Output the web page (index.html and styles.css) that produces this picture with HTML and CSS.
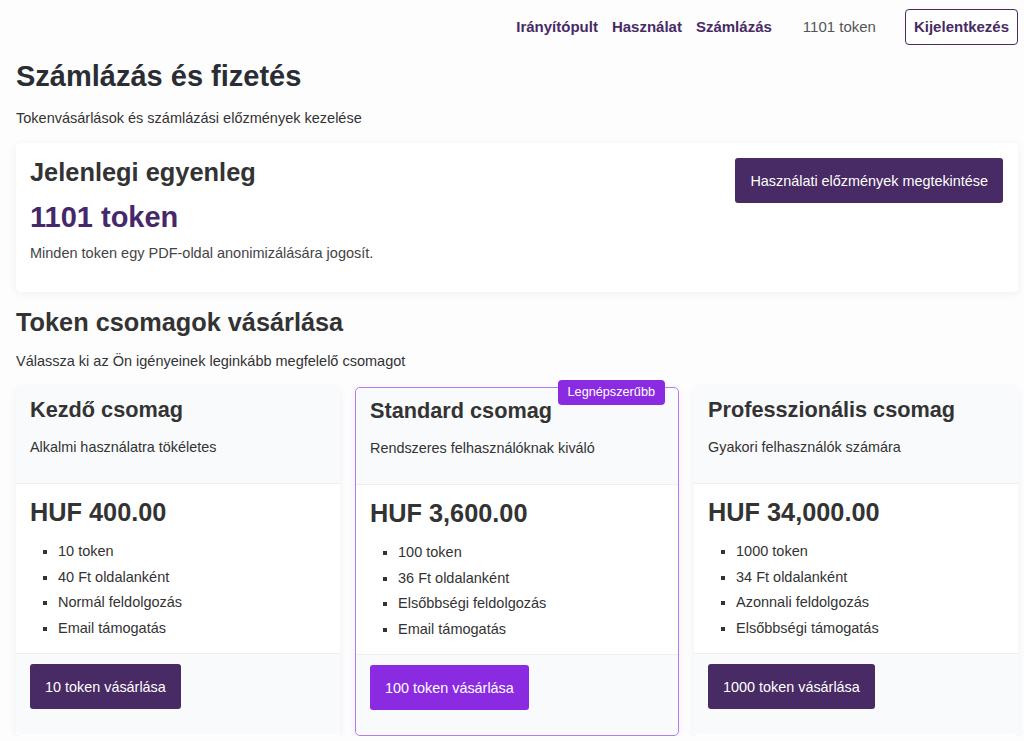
FILE: index.html
```html
<!DOCTYPE html>
<html lang="hu">
<head>
    <meta charset="UTF-8">
    <meta name="viewport" content="width=device-width, initial-scale=1.0">
    <title>Számlázás és fizetés</title>
    <link rel="stylesheet" href="styles.css">
</head>
<body>
    <header class="topbar">
        <nav class="nav">
            <a href="#" class="nav-link">Irányítópult</a>
            <a href="#" class="nav-link">Használat</a>
            <a href="#" class="nav-link">Számlázás</a>
        </nav>
        <span class="nav-balance">1101 token</span>
        <button class="btn-outline">Kijelentkezés</button>
    </header>

    <main class="page">
        <h1 class="page-title">Számlázás és fizetés</h1>
        <p class="page-sub">Tokenvásárlások és számlázási előzmények kezelése</p>

        <section class="card balance">
            <div class="balance-info">
                <h2 class="balance-title">Jelenlegi egyenleg</h2>
                <div class="balance-value">1101 token</div>
                <p class="balance-note">Minden token egy PDF-oldal anonimizálására jogosít.</p>
            </div>
            <button class="btn btn-dark">Használati előzmények megtekintése</button>
        </section>

        <h2 class="section-title">Token csomagok vásárlása</h2>
        <p class="section-sub">Válassza ki az Ön igényeinek leginkább megfelelő csomagot</p>

        <div class="plans">
            <div class="card plan">
                <div class="plan-head">
                    <h3 class="plan-name">Kezdő csomag</h3>
                    <p class="plan-desc">Alkalmi használatra tökéletes</p>
                </div>
                <div class="plan-body">
                    <div class="plan-price">HUF 400.00</div>
                    <ul class="plan-features">
                        <li>10 token</li>
                        <li>40 Ft oldalanként</li>
                        <li>Normál feldolgozás</li>
                        <li>Email támogatás</li>
                    </ul>
                </div>
                <div class="plan-foot">
                    <button class="btn btn-dark">10 token vásárlása</button>
                </div>
            </div>

            <div class="card plan featured">
                <span class="badge">Legnépszerűbb</span>
                <div class="plan-head">
                    <h3 class="plan-name">Standard csomag</h3>
                    <p class="plan-desc">Rendszeres felhasználóknak kiváló</p>
                </div>
                <div class="plan-body">
                    <div class="plan-price">HUF 3,600.00</div>
                    <ul class="plan-features">
                        <li>100 token</li>
                        <li>36 Ft oldalanként</li>
                        <li>Elsőbbségi feldolgozás</li>
                        <li>Email támogatás</li>
                    </ul>
                </div>
                <div class="plan-foot">
                    <button class="btn btn-violet">100 token vásárlása</button>
                </div>
            </div>

            <div class="card plan">
                <div class="plan-head">
                    <h3 class="plan-name">Professzionális csomag</h3>
                    <p class="plan-desc">Gyakori felhasználók számára</p>
                </div>
                <div class="plan-body">
                    <div class="plan-price">HUF 34,000.00</div>
                    <ul class="plan-features">
                        <li>1000 token</li>
                        <li>34 Ft oldalanként</li>
                        <li>Azonnali feldolgozás</li>
                        <li>Elsőbbségi támogatás</li>
                    </ul>
                </div>
                <div class="plan-foot">
                    <button class="btn btn-dark">1000 token vásárlása</button>
                </div>
            </div>
        </div>
    </main>
</body>
</html>
```

FILE: styles.css
```css
* {
    box-sizing: border-box;
}
body {
    font-family: "Liberation Sans", Arial, sans-serif;
    margin: 0;
    padding: 0;
    background-color: #fdfdfe;
    color: #333;
}

.topbar {
    display: flex;
    justify-content: flex-end;
    align-items: center;
    height: 53px;
    padding: 0 6px 0 16px;
}
.nav {
    display: flex;
    gap: 14px;
}
.nav-link {
    color: #482a64;
    font-weight: bold;
    font-size: 15px;
    text-decoration: none;
}
.nav-balance {
    color: #555;
    font-size: 15px;
    margin: 0 29px 0 31px;
}
.btn-outline {
    font-family: inherit;
    font-size: 15px;
    font-weight: bold;
    color: #482a64;
    background: #fff;
    border: 1px solid #482a64;
    border-radius: 4px;
    padding: 0 8px;
    height: 36px;
}

.page {
    padding: 0 6px 0 16px;
}
.page-title {
    font-size: 29px;
    margin: 7px 0 0;
    line-height: 32px;
    color: #2a2d33;
}
.page-sub {
    font-size: 14.5px;
    line-height: 17px;
    color: #333;
    margin: 18px 0 16px;
}

.card {
    background: #fff;
    border-radius: 5px;
    box-shadow: 0 2px 10px rgba(40, 40, 90, 0.06);
}

.balance {
    display: flex;
    justify-content: space-between;
    align-items: flex-start;
    padding: 15px 15px 15px 14px;
    height: 149px;
}
.balance-title {
    font-size: 25.4px;
    margin: 0;
    line-height: 29px;
    color: #333;
}
.balance-value {
    font-size: 29px;
    font-weight: bold;
    color: #46286a;
    margin-top: 13px;
    line-height: 34px;
}
.balance-note {
    font-size: 14.5px;
    line-height: 17px;
    margin: 11px 0 0;
    color: #444;
}

.btn {
    font-family: inherit;
    font-size: 14.4px;
    color: #fff;
    border: none;
    border-radius: 3px;
    padding: 0 15px;
    height: 45px;
}
.btn-dark {
    background-color: #482a64;
}
.btn-violet {
    background-color: #8a2be2;
}

.section-title {
    font-size: 25.3px;
    margin: 15px 0 0;
    line-height: 30px;
    color: #333;
}
.section-sub {
    font-size: 14.5px;
    line-height: 17px;
    color: #333;
    margin: 16px 0 17px;
}

.plans {
    display: grid;
    grid-template-columns: 1fr 1fr 1fr;
    gap: 15px;
}
.plan {
    position: relative;
    display: flex;
    flex-direction: column;
}
.plan.featured {
    border: 1px solid #b27cf0;
}
.badge {
    position: absolute;
    top: -8px;
    right: 13px;
    background-color: #8a2be2;
    color: #fff;
    font-size: 12.7px;
    padding: 0 10px;
    height: 25px;
    line-height: 25px;
    border-radius: 4px;
}
.plan-head {
    background: #f9fafb;
    border-bottom: 1px solid #eceef2;
    padding: 10px 14px 0;
    height: 97px;
    border-radius: 5px 5px 0 0;
}
.plan-name {
    font-size: 21.7px;
    margin: 0;
    line-height: 26px;
    color: #333;
}
.plan-desc {
    font-size: 14.4px;
    line-height: 17px;
    margin: 16px 0 0;
    color: #333;
}
.plan-body {
    padding: 13px 14px 0;
    height: 170px;
    border-bottom: 1px solid #eceef2;
}
.plan-price {
    font-size: 25.3px;
    font-weight: bold;
    line-height: 30px;
}
.plan-features {
    list-style: square;
    margin: 12px 0 0;
    padding-left: 28px;
    font-size: 14.5px;
    color: #333;
}
.plan-features li {
    line-height: 25.5px;
}
.plan-foot {
    background: #f9fafb;
    padding: 10px 14px 25px;
    border-radius: 0 0 5px 5px;
}
```
